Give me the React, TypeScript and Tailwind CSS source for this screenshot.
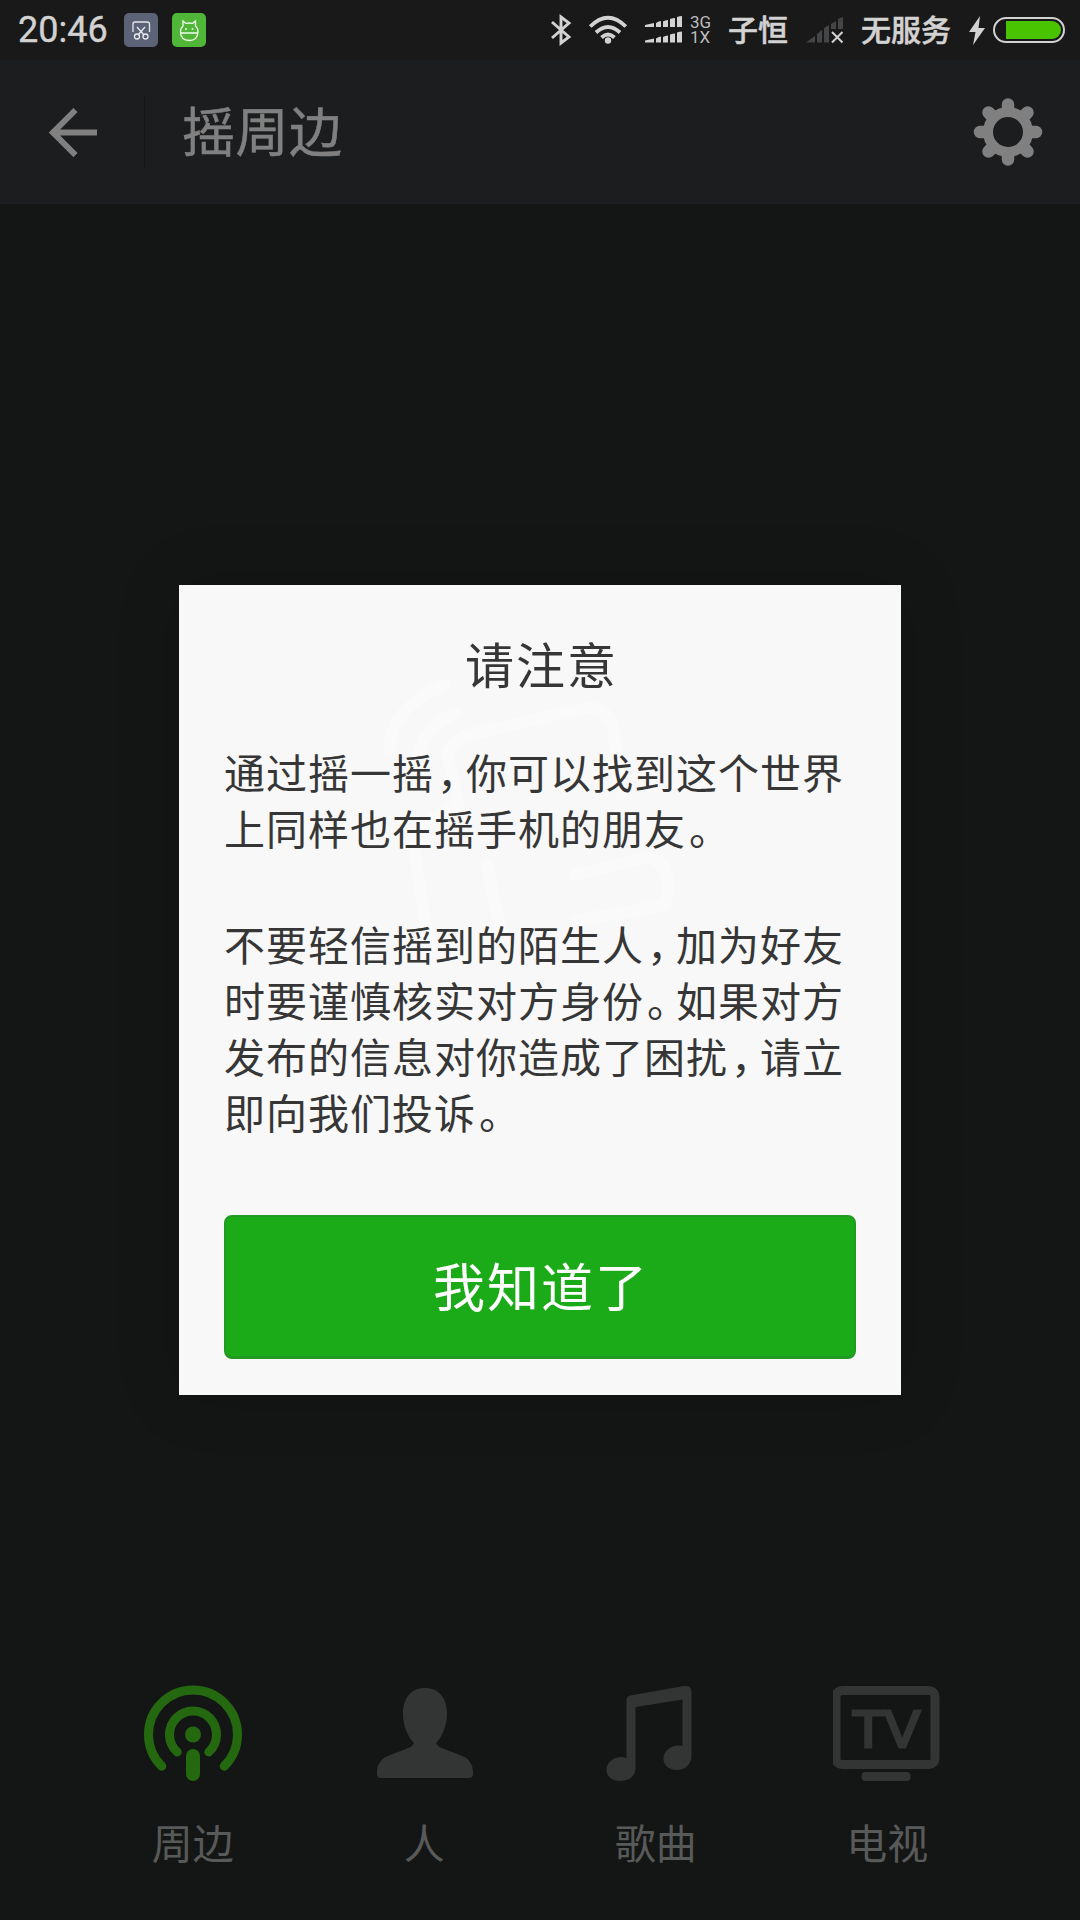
import type { ReactNode } from "react";

const tabs = [
  { id: "nearby", label: "周边", icon: <NearbyIcon /> },
  { id: "people", label: "人", icon: <PersonIcon /> },
  { id: "music", label: "歌曲", icon: <MusicIcon /> },
  { id: "tv", label: "电视", icon: <TvIcon /> },
];

function NearbyIcon() {
  return (
    <svg width="108" height="108" viewBox="0 0 108 108" fill="none" stroke="#24680f" strokeWidth="9" strokeLinecap="round">
      <path d="M22.8 84.2A44.5 44.5 0 1 1 85.2 84.2" transform="translate(0 2)" />
      <path d="M38.2 70A23.5 23.5 0 1 1 69.8 70" transform="translate(0 2)" />
      <circle cx="54" cy="54.500" r="8" fill="#24680f" stroke="none" />
      <path d="M54 76v18" strokeWidth="14" />
    </svg>
  );
}

function PersonIcon() {
  return (
    <svg width="108" height="108" viewBox="-1 0 108 108" fill="#333434">
      <path d="M54 8C68 8 76 18 76 34C76 46 71 57 65 63L67 66Q68 67 72 68.500L89 75Q101 79 102 91V94Q102 98 98 98H10Q6 98 6 94V91Q7 79 19 75L36 68.500Q40 67 41 66L43 63C37 57 32 46 32 34C32 18 40 8 54 8Z" />
    </svg>
  );
}

function MusicIcon() {
  return (
    <svg width="108" height="108" viewBox="1 0 108 108" fill="#333434">
      <path d="M25.500 80V20Q25.500 16 29.500 15.500L83 6Q90.500 5 90.500 12V76C90.500 84 84 90 76 90C69 90 62.500 86 62.500 79C62.500 71 70 65 78 65.500L81.500 66V19.500L34.500 27V88C34.500 96 28 101 19.500 101C12 101 5.500 97 5.500 90C5.500 82 13 76.500 21 77L25.500 78Z" />
    </svg>
  );
}

function TvIcon() {
  return (
    <svg width="108" height="108" viewBox="1.5 0 108 108">
      <rect x="4.5" y="10.500" width="99" height="74" rx="6" fill="none" stroke="#333434" strokeWidth="9" />
      <rect x="30" y="92" width="49" height="9" rx="4" fill="#333434" />
      <text x="54.500" y="67" textAnchor="middle" fontSize="52" fill="#333434" stroke="#333434" strokeWidth="3" textLength="68" lengthAdjust="spacingAndGlyphs" className="font-['Liberation_Sans',sans-serif]">
        TV
      </text>
    </svg>
  );
}

function StatusBar() {
  return (
    <div className="flex h-15 items-center bg-[#19191a] pl-[18px] text-[#d2d2d2]">
      <span className="w-[106px] font-['Roboto',sans-serif] text-[36px] leading-none [-webkit-text-stroke:0.4px]">20:46</span>

      <svg width="34" height="34" viewBox="0 0 34 34" fill="none">
        <rect width="34" height="34" rx="5" fill="#5d6377" />
        <g stroke="#e6e8ee" strokeWidth="1.3">
          <path d="M9 19V11Q9 9 11 9H23Q25.500 9 25.500 11V19" />
          <path d="M13 14L20 22M21 14L14 22" />
          <circle cx="13" cy="23.500" r="2.500" />
          <circle cx="21.500" cy="23.500" r="2.500" />
        </g>
      </svg>
      <svg className="ml-[14px]" width="34" height="34" viewBox="0 0 34 34" fill="none">
        <rect width="34" height="34" rx="5" fill="#4fb638" />
        <g stroke="#effbea" strokeWidth="1.3">
          <path d="M11 13L11 8L14 10.500Q17 9.500 20.500 10.500L23.500 8V13Q26 15 26 19Q25.500 27.500 17.300 27.500Q8.500 27 8.500 19Q8.500 15 11 13ZM8.500 20H26" />
        </g>
        <circle cx="14" cy="16" r="1" fill="#effbea" />
        <circle cx="20.500" cy="16" r="1" fill="#effbea" />
      </svg>

      <svg className="ml-[344px]" width="22" height="32" viewBox="0 0 22 32" fill="none" stroke="currentColor" strokeWidth="2.900">
        <path d="M2 8L19 23L11 29V3L19 9L2 24" />
      </svg>
      <svg className="ml-[16px]" width="40" height="30" viewBox="0 0 40 30" fill="none" stroke="currentColor" strokeWidth="3.800">
        <path d="M2.200 11.500Q20 -6 37.800 11.500M8 17.500Q20 6.500 32 17.500M13.500 22.500Q20 16.500 26.500 22.500" />
        <circle cx="20" cy="25.500" r="3.200" fill="currentColor" stroke="none" />
      </svg>
      <svg className="ml-[17px]" width="38" height="28" viewBox="0 0 38 28" fill="currentColor">
        <path id="bars" d="M0 11V9L9 7V11ZM11 11V7Q14 5 16 5V11ZM18 11V5.500Q20 4 23 4V11ZM25 11V3Q28 2 30 2V11ZM32 11V1Q35 0 37 0V11Z" />
        <use href="#bars" y="15.500" />
      </svg>
      <div className="ml-[7px] w-[24px] font-['Roboto',sans-serif] text-[17px] leading-[15px] text-[#bcbcbc]">
        <div>3G</div>
        <div>1X</div>
      </div>
      <span className="-mt-[5px] ml-[14px] w-[78px] text-[30px] leading-none font-medium [-webkit-text-stroke:0.5px]">子恒</span>
      <svg width="38" height="28" viewBox="0 0 38 28">
        <path fill="#444546" d="M0 26.500L9 20V26.500ZM11 26.500V18L16 14V26.500ZM18 26.500V12L23 9V26.500ZM25 13V8L30 5V13ZM32 13V3L37 1V13Z" />
        <path fill="none" stroke="#d2d2d2" strokeWidth="2" d="M26 16L36.500 26.500M36.500 16L26 26.500" />
      </svg>
      <span className="-mt-[5px] ml-[17px] w-[90px] text-[30px] leading-none font-medium [-webkit-text-stroke:0.5px]">无服务</span>
      <svg className="ml-[17px]" width="18" height="30" viewBox="0 0 18 30" fill="currentColor">
        <path d="M12 1L1 17H7.500L5 30L17 13H10.500Z" />
      </svg>
      <svg className="ml-[7px]" width="73" height="26" viewBox="0 0 73 26">
        <rect x="1" y="1" width="70" height="24" rx="12" fill="none" stroke="#d2d2d2" strokeWidth="2" />
        <path d="M13 4H59A9 9 0 0 1 59 22H13Z" fill="#49c400" />
      </svg>
    </div>
  );
}

function Header() {
  return (
    <header className="flex h-36 items-center border-b border-[#1f2022] bg-[#1c1d1f] text-[#808080]">
      <svg className="ml-[48px]" width="50" height="50" viewBox="0 0 50 50" fill="none" stroke="currentColor" strokeWidth="6">
        <path d="M27.500 3L5 25.500L27.500 48M5 25.500H49" />
      </svg>
      <div className="ml-[46px] h-[72px] w-px bg-[#141416]" />
      <h1 className="-mt-[5px] ml-[37px] flex-1 text-[53px] leading-none tracking-[0.5px] [-webkit-text-stroke:0.5px]">摇周边</h1>
      <svg className="mr-[37px]" width="70" height="70" viewBox="-35 -35 70 70">
        <path
          d="M0 -27.500V-24M0 27.500V24M-28 0H-24M28 0H24M-19.500 -19.500L-16 -16M19.500 19.500L16 16M-19.500 19.500L-16 16M19.500 -19.500L16 -16"
          stroke="currentColor"
          strokeWidth="12.500"
          strokeLinecap="round"
        />
        <circle r="20" fill="none" stroke="currentColor" strokeWidth="10" />
      </svg>
    </header>
  );
}

// Full stops and commas are set narrower than the other glyphs
function P({ children }: { children: ReactNode }) {
  return <span className="inline-block w-[32px] pl-[3px] [font-feature-settings:'halt']">{children}</span>;
}

// Faint shaking hand behind the notice
function HandWatermark() {
  return (
    <svg className="absolute top-[90px] left-[190px]" width="330" height="330" viewBox="0 0 330 330" fill="none" stroke="#fafafa" strokeWidth="12" strokeLinecap="round" strokeLinejoin="round">
      <path d="M76 10Q24 30 20 74M86 38Q50 54 48 92" />
      <path d="M78 80Q84 62 108 58L212 34Q236 30 244 50L252 120M78 80L90 130Q46 145 46 180L60 270" />
      <path d="M118 190L134 270M206 200L280 182Q306 190 296 230L206 246" />
    </svg>
  );
}

function NoticeDialog() {
  return (
    <div className="relative h-[810px] w-[722px] bg-[#f8f8f8] px-[45px] text-[#363636] shadow-[0_0_60px_rgba(0,0,0,0.16)]">
      <HandWatermark />
      <div className="relative">
        <h2 className="pt-[47px] pl-[3px] text-center text-[49px] leading-[62px] tracking-[2px]">请注意</h2>
        <div className="mt-[49px] text-[41px] leading-[56px] tracking-[1px] whitespace-nowrap">
          <p>通过摇一摇<P>，</P>你可以找到这个世界</p>
          <p>上同样也在摇手机的朋友<P>。</P></p>
          <p className="mt-[60px]">不要轻信摇到的陌生人<P>，</P>加为好友</p>
          <p>时要谨慎核实对方身份<P>。</P>如果对方</p>
          <p>发布的信息对你造成了困扰<P>，</P>请立</p>
          <p>即向我们投诉<P>。</P></p>
        </div>
        <button className="mt-[76px] block h-[144px] w-[632px] rounded-lg border-2 border-b-[3px] border-[#229a22] bg-[#1bab19] pb-[4px] pl-[2px] text-[52px] leading-none tracking-[2px] text-white">
          我知道了
        </button>
      </div>
    </div>
  );
}

export default function App() {
  return (
    <div className="flex h-[1920px] w-[1080px] flex-col overflow-hidden bg-[#141615] font-['Noto_Sans_CJK_SC',sans-serif]">
      <StatusBar />
      <Header />
      <main className="flex flex-1 justify-center pt-[381px]">
        <NoticeDialog />
      </main>
      <nav className="grid h-[240px] grid-cols-4 px-[77px]">
        {tabs.map((tab) => (
          <div key={tab.id} className="flex flex-col items-center">
            {tab.icon}
            <span className="mt-[25px] text-[41px] leading-[56px] text-[#585a59]">{tab.label}</span>
          </div>
        ))}
      </nav>
    </div>
  );
}
